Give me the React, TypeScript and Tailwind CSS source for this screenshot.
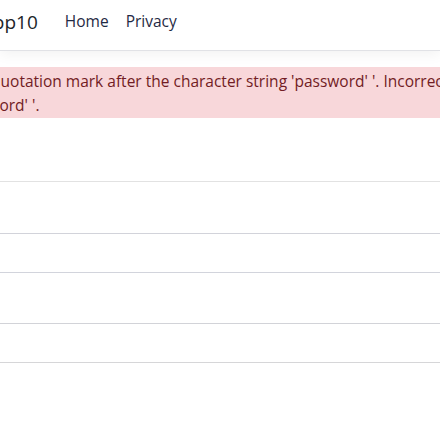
export default function App() {
  const rows = [
    { h: 'h-[52px]', border: 'border-[#e2e2e2]' },
    { h: 'h-[39px]', border: 'border-[#d2d3da]' },
    { h: 'h-[51px]', border: 'border-[#d2d4dc]' },
    { h: 'h-[39px]', border: 'border-[#d2d3d8]' },
  ]

  return (
    <div className="w-[440px] h-[428px] overflow-hidden bg-white font-['Open_Sans','Noto_Sans',sans-serif] text-[15.5px] leading-6 text-[#212529]">
      {/* Navbar */}
      <header className="h-[51px] pt-[6px] border-b border-[#e1e2e6] bg-white shadow-[0_4px_12px_rgba(0,0,0,0.05)] mb-4">
        <nav className="flex items-center h-[30px] whitespace-nowrap">
          <a className="-ml-[59px] text-[19px] leading-[30px] text-[#212529] mr-[27px] mt-[1px]">WebApp10</a>
          <ul className="flex items-center gap-[17px] text-[#1f2a44] -mt-[1px]">
            <li>
              <a>Home</a>
            </li>
            <li>
              <a>Privacy</a>
            </li>
          </ul>
        </nav>
      </header>

      {/* Error alert */}
      <div className="bg-[#f8d7da] text-[#721c24] pt-[2px] pb-[1px] whitespace-nowrap">
        <div className="-ml-[80px]">Unclosed quotation mark after the character string 'password' '. Incorrect syntax near</div>
        <div className="-ml-[86px]">near 'password' '.</div>
      </div>

      {/* Table rows */}
      <div className="mt-[63px]">
        {rows.map((r, i) => (
          <div key={i} className={`${r.h} border-t ${r.border}`} />
        ))}
        <div className="border-t border-[#d6d6d8]" />
      </div>
    </div>
  )
}
